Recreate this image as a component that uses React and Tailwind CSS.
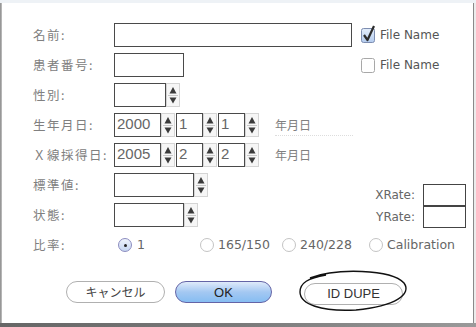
import React from 'react'

const jp = { fontFamily: '"Noto Sans CJK JP", "Noto Sans", sans-serif' }
const dv = { fontFamily: '"DejaVu Sans", "Liberation Sans", sans-serif' }
const num = { fontFamily: '"Liberation Sans", Arial, sans-serif' }

function Spinner({ h = 24 }) {
  return (
    <svg width="14" height={h} viewBox="0 0 14 24" className="shrink-0">
      <rect x="0.5" y="0.5" width="13" height="23" fill="#f6f6f6" stroke="#d4d4d4" />
      <path d="M7 4 L10.5 10.5 L3.5 10.5 Z" fill="#3a3a3a" />
      <line x1="2" y1="12.5" x2="12" y2="12.5" stroke="#c8c8c8" />
      <path d="M3.5 14.5 L10.5 14.5 L7 20.5 Z" fill="#3a3a3a" />
    </svg>
  )
}

function Box({ w, value, className = '' }) {
  return (
    <div
      className={`h-[24px] border border-[#4a4a4a] bg-white pl-[2px] text-[15px] leading-[19px] text-[#666] ${className}`}
      style={{ ...num, width: w }}
    >
      {value}
    </div>
  )
}

function Row({ label, children }) {
  return (
    <div className="flex h-[24px] items-center">
      <div className="w-[81px] text-[12.5px] tracking-[1.5px] text-[#808080]" style={jp}>
        {label}
      </div>
      {children}
    </div>
  )
}

function Check({ checked }) {
  return (
    <svg width="14" height="15" viewBox="0 0 14 15" className="shrink-0 overflow-visible">
      <defs>
        <linearGradient id="cb" x1="0" y1="0" x2="0" y2="1">
          <stop offset="0" stopColor="#e4eefb" />
          <stop offset="1" stopColor="#b3cbee" />
        </linearGradient>
      </defs>
      <rect
        x="0.5"
        y="0.5"
        width="13"
        height="14"
        rx="2"
        fill={checked ? 'url(#cb)' : '#fff'}
        stroke={checked ? '#7d8db0' : '#a8a8a8'}
      />
      {checked && (
        <path d="M3 7 L6.5 12 L13 -2" fill="none" stroke="#2c2c2c" strokeWidth="2.2" strokeLinejoin="round" />
      )}
    </svg>
  )
}

function Radio({ on }) {
  return on ? (
    <span className="flex h-[14px] w-[14px] shrink-0 items-center justify-center rounded-full border border-[#8c8cc0] bg-gradient-to-b from-[#eef3fb] to-[#c5d6f0]">
      <span className="h-[3px] w-[3px] rounded-full bg-[#222]" />
    </span>
  ) : (
    <span className="h-[14px] w-[14px] shrink-0 rounded-full border border-[#c4c4c4] bg-white" />
  )
}

export default function App() {
  return (
    <div className="flex h-[327px] w-[476px] flex-col overflow-hidden bg-white">
      <div className="h-[3px] bg-[#eef2f6]" />
      <div className="flex flex-1">
        <div className="w-[2px] bg-gradient-to-r from-[#8a8a8a] to-[#c4c4c4]" />

        <div className="flex flex-1 flex-col pl-[31px] pt-[20px]">
          {/* MAIN */}
          <div className="flex">
            <div className="flex w-[328px] flex-col gap-[6px]">
              <Row label="名前:">
                <Box w={238} value="" />
              </Row>
              <Row label="患者番号:">
                <Box w={70} value="" />
              </Row>
              <Row label="性別:">
                <Box w={52} value="" />
                <Spinner />
              </Row>
              <Row label="生年月日:">
                <Box w={47} value="2000" />
                <Spinner />
                <Box w={27} value="1" className="ml-px" />
                <Spinner />
                <Box w={27} value="1" className="ml-px" />
                <Spinner />
                <div className="relative ml-[16px] text-[12px] text-[#808080]" style={jp}>
                  年月日
                  <div className="absolute left-0 top-[19px] w-[78px] border-b border-dotted border-[#ddd]" />
                </div>
              </Row>
              <Row label="Ｘ線採得日:">
                <Box w={47} value="2005" />
                <Spinner />
                <Box w={27} value="2" className="ml-px" />
                <Spinner />
                <Box w={27} value="2" className="ml-px" />
                <Spinner />
                <div className="ml-[16px] text-[12px] text-[#808080]" style={jp}>
                  年月日
                </div>
              </Row>
              <Row label="標準値:">
                <Box w={80} value="" />
                <Spinner />
              </Row>
              <Row label="状態:">
                <Box w={70} value="" />
                <Spinner />
              </Row>
            </div>

            <div className="flex w-[105px] flex-col justify-between">
              <div className="flex flex-col gap-[6px]">
                <div className="flex h-[24px] items-center gap-[5px] text-[12px] text-[#555]" style={dv}>
                  <Check checked />
                  File Name
                </div>
                <div className="flex h-[24px] items-center gap-[5px] text-[12px] text-[#555]" style={dv}>
                  <Check />
                  File Name
                </div>
              </div>
              <div className="-mb-px flex flex-col text-[12px] text-[#666]" style={dv}>
                <div className="flex items-center justify-end gap-[8px]">
                  <span>XRate:</span>
                  <div className="h-[22px] w-[43px] border-[1.5px] border-[#444]" />
                </div>
                <div className="flex items-center justify-end gap-[8px]">
                  <span>YRate:</span>
                  <div className="h-[22px] w-[43px] border-[1.5px] border-[#444]" />
                </div>
              </div>
            </div>
          </div>

          {/* RATIO */}
          <div className="mt-[6px] flex h-[24px] items-center text-[12.5px] text-[#666]">
            <div className="w-[85px] text-[12.5px] tracking-[1.5px] text-[#808080]" style={jp}>
              比率:
            </div>
            <div className="flex w-[82px] items-center gap-[5px]" style={dv}>
              <Radio on />1
            </div>
            <div className="flex w-[82px] items-center gap-[4px]" style={dv}>
              <Radio />
              165/150
            </div>
            <div className="flex w-[87px] items-center gap-[4px]" style={dv}>
              <Radio />
              240/228
            </div>
            <div className="flex items-center gap-[4px]" style={dv}>
              <Radio />
              Calibration
            </div>
          </div>

          {/* BUTTONS */}
          <div className="mt-[23px] flex items-center pl-[33px]">
            <button
              className="h-[22px] w-[99px] rounded-full border border-[#b0b0b0] bg-white text-[12px] text-[#444]"
              style={jp}
            >
              キャンセル
            </button>
            <button
              className="ml-[10px] h-[22px] w-[97px] rounded-full border border-[#6464a6] bg-gradient-to-b from-[#dfeafa] via-[#a4c8f2] to-[#86bdf2] text-[13px] text-[#222]"
              style={num}
            >
              OK
            </button>
            <div className="relative ml-[32px]">
              <button
                className="h-[22px] w-[99px] rounded-full border border-[#b0b0b0] bg-white text-[13px] text-[#333]"
                style={num}
              >
                ID DUPE
              </button>
              <svg
                width="115"
                height="46"
                viewBox="0 0 115 46"
                className="pointer-events-none absolute left-[-8px] top-[-12px]"
              >
                <path
                  d="M14 10 C 40 0, 95 1, 108 15 C 116 26, 100 38, 60 42 C 25 44, 4 36, 4 24 C 4 15, 12 10, 30 7"
                  fill="none"
                  stroke="#111"
                  strokeWidth="1.4"
                />
              </svg>
            </div>
          </div>
        </div>

        <div className="w-px bg-[#8a8a8a]" />
        <div className="w-[2px] bg-[#ececec]" />
      </div>
      <div className="h-[4px] bg-gradient-to-r from-[#666] via-[#7a7a7a] to-[#9a9a9a]" />
    </div>
  )
}
